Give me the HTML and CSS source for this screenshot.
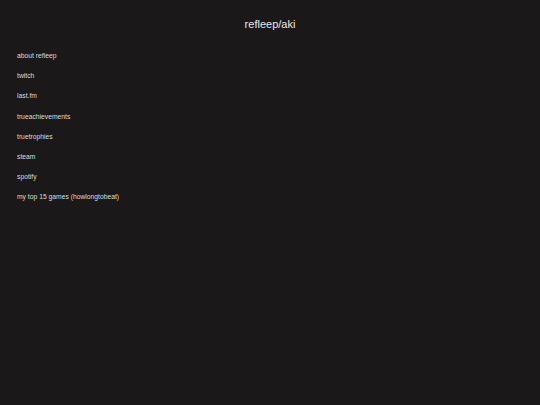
FILE: index.html
```html
<!DOCTYPE html>
<html lang="en">
<head>
    <meta charset="UTF-8">
    <meta name="viewport" content="width=device-width, initial-scale=1.0">
    <title>refleep/aki</title>
    <link rel="stylesheet" href="styles.css">
</head>
<body>
    <header>refleep/aki</header>

    <ul class="links">
        <li><a href="#">about refleep</a></li>
        <li><a href="#">twitch</a></li>
        <li><a href="#">last.fm</a></li>
        <li><a href="#">trueachievements</a></li>
        <li><a href="#">truetrophies</a></li>
        <li><a href="#">steam</a></li>
        <li><a href="#">spotify</a></li>
        <li><a href="#">my top 15 games (howlongtobeat)</a></li>
    </ul>
</body>
</html>
```

FILE: styles.css
```css
body {
    font-family: "Liberation Sans", Arial, sans-serif;
    margin: 0;
    padding: 0;
    background-color: #1b1819;
    color: #e0e0e0;
}

header {
    text-align: center;
    font-size: 11px;
    padding-top: 18px;
    line-height: 13px;
    color: #e8e8e8;
}

.links {
    list-style: none;
    margin: 0;
    padding: 21px 17px;
}

.links li {
    font-size: 6.75px;
    line-height: 8px;
    margin-bottom: 12.2px;
}

.links a {
    color: #dcdcdc;
    text-decoration: none;
}
```
